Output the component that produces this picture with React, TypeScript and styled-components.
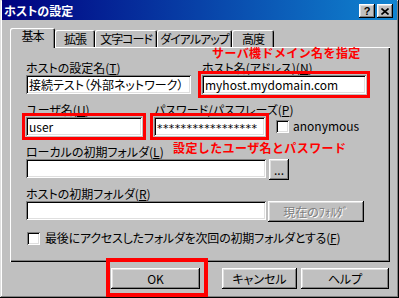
import React from 'react';
import styled, { createGlobalStyle } from 'styled-components';

const GlobalStyle = createGlobalStyle`
  html, body {
    margin: 0;
    padding: 0;
    background: #c0c0c0;
  }
  body {
    font-family: "Noto Sans CJK JP", sans-serif;
    font-size: 12px;
    font-feature-settings: "palt";
    color: #000;
  }
  * {
    box-sizing: border-box;
  }
`;

const raised = `
  box-shadow: inset -1px -1px #000, inset 1px 1px #fff, inset -2px -2px #808080, inset 2px 2px #dfdfdf;
`;

const sunken = `
  box-shadow: inset 1px 1px #808080, inset -1px -1px #fff, inset 2px 2px #000, inset -2px -2px #dfdfdf;
`;

const Window = styled.div`
  width: 399px;
  height: 298px;
  background: #c0c0c0;
  padding: 0 2px 2px 2px;
  display: flex;
  flex-direction: column;
  box-shadow: inset -1px -1px #000, inset 1px 1px #dfdfdf, inset -2px -2px #808080, inset 2px 2px #fff;
`;

const TitleBar = styled.div`
  flex: none;
  height: 20px;
  display: flex;
  align-items: center;
  padding: 2px 4px 0 2px;
  background: linear-gradient(to right, #000080, #1084d0);
`;

const Title = styled.span`
  flex: 1;
  color: #fff;
  font-weight: bold;
  line-height: 14px;
`;

const CapButton = styled.span`
  width: 16px;
  height: 14px;
  background: #c0c0c0;
  ${raised}
  display: flex;
  align-items: center;
  justify-content: center;
  font: bold 11px "Liberation Sans", sans-serif;
  line-height: 14px;
  & + & {
    margin-left: 2px;
  }
`;

const TabStrip = styled.div`
  position: relative;
  z-index: 1;
  display: flex;
  align-items: flex-end;
  height: 19px;
  margin: 8px 0 0 8px;
`;

const Tab = styled.div<{ $w: number; $active?: boolean }>`
  flex: none;
  width: ${p => p.$w}px;
  height: ${p => (p.$active ? 20 : 17)}px;
  margin-bottom: ${p => (p.$active ? -1 : 0)}px;
  padding-top: ${p => (p.$active ? 1 : 2)}px;
  text-align: center;
  line-height: 14px;
  letter-spacing: -1px;
  white-space: nowrap;
  background: #c0c0c0;
  border-radius: 2px 2px 0 0;
  box-shadow: inset 1px 1px #fff, inset -1px 0 #000, inset -2px 0 #808080;
`;

const Panel = styled.div`
  position: relative;
  flex: none;
  height: 215px;
  margin: 0 7px 0 8px;
  padding: 13px 0 0 16px;
  box-shadow: inset 1px 1px #fff, inset -1px -1px #000, inset -2px -2px #808080;
`;

// red annotations drawn over the dialog
const Note = styled.div`
  position: absolute;
  color: #f00;
  font-weight: bold;
  font-feature-settings: normal;
  letter-spacing: 0.4px;
  line-height: 12px;
  white-space: nowrap;
`;

const Row = styled.div<{ $gap: number }>`
  display: flex;
  align-items: flex-end;
  gap: ${p => p.$gap}px;
  & + & {
    margin-top: 8px;
  }
`;

const Field = styled.div<{ $w?: number }>`
  flex: none;
  width: ${p => (p.$w ? `${p.$w}px` : 'auto')};
  display: flex;
  flex-direction: column;
`;

const Label = styled.div`
  height: 15px;
  padding-top: 1px;
  line-height: 14px;
  white-space: nowrap;
`;

const Key = styled.span`
  text-decoration: underline;
`;

const Input = styled.div<{ $w?: number; $marked?: boolean }>`
  width: ${p => (p.$w ? `${p.$w}px` : '100%')};
  height: 19px;
  flex: none;
  padding: 0 3px;
  background: #fff;
  ${sunken}
  line-height: 19px;
  text-align: left;
  white-space: nowrap;
  overflow: hidden;
  outline: ${p => (p.$marked ? '3px solid #f00' : 'none')};
  outline-offset: 1px;
`;

const Secret = styled.span`
  font-family: "DejaVu Sans", sans-serif;
  font-size: 11px;
  letter-spacing: 0.4px;
`;

const InputLine = styled.div<{ $gap: number }>`
  display: flex;
  align-items: flex-start;
  height: 19px;
  gap: ${p => p.$gap}px;
`;

const PushButton = styled.div<{ $w: number; $disabled?: boolean }>`
  width: ${p => p.$w}px;
  height: 21px;
  flex: none;
  background: #c0c0c0;
  ${raised}
  display: flex;
  align-items: center;
  justify-content: center;
  white-space: nowrap;
  color: ${p => (p.$disabled ? '#808080' : '#000')};
  text-shadow: ${p => (p.$disabled ? '1px 1px #fff' : 'none')};
`;

const Check = styled.div<{ $gap: number }>`
  display: flex;
  align-items: center;
  gap: ${p => p.$gap}px;
  white-space: nowrap;
  line-height: 14px;
`;

const CheckBox = styled.span`
  width: 13px;
  height: 13px;
  flex: none;
  background: #fff;
  ${sunken}
`;

const AnonCheck = styled(Check)`
  flex: none;
  margin: 0 0 3px -1px;
`;

const LastRow = styled.div`
  margin: 11px 0 0 1px;
  letter-spacing: -0.2px;
`;

const Footer = styled.div`
  display: flex;
  justify-content: flex-end;
  gap: 4px;
  margin-top: 6px;
  padding-right: 8px;
`;

const Marked = styled.div`
  position: relative;
  margin-right: 18px;
`;

const RedFrame = styled.div`
  position: absolute;
  top: -10px;
  bottom: -8px;
  left: -5px;
  right: -8px;
  border: 4px solid #f00;
  pointer-events: none;
`;

export default function App() {
  return (
    <>
      <GlobalStyle />
      <Window>
        <TitleBar>
          <Title>ホストの設定</Title>
          <CapButton>?</CapButton>
          <CapButton>
            <svg width="8" height="7" viewBox="0 0 8 7">
              <path d="M0.5 0.5 L7.5 6.5 M7.5 0.5 L0.5 6.5" stroke="#000" strokeWidth="1.6" />
            </svg>
          </CapButton>
        </TitleBar>

        <TabStrip>
          <Tab $w={45} $active>基本</Tab>
          <Tab $w={40}>拡張</Tab>
          <Tab $w={62}>文字コード</Tab>
          <Tab $w={75}>ダイアルアップ</Tab>
          <Tab $w={42}>高度</Tab>
        </TabStrip>

        <Panel>
          <Note style={{ left: 202, top: 0 }}>サーバ機ドメイン名を指定</Note>
          <Note style={{ left: 163, top: 95 }}>設定したユーザ名とパスワード</Note>

          <Row $gap={11}>
            <Field $w={165}>
              <Label>ホストの設定名(<Key>T</Key>)</Label>
              <Input>接続テスト（外部ネットワーク）</Input>
            </Field>
            <Field $w={164}>
              <Label>ホスト名(アドレス)(<Key>N</Key>)</Label>
              <Input $marked>myhost.mydomain.com</Input>
            </Field>
          </Row>

          <Row $gap={12}>
            <Field $w={116}>
              <Label>ユーザ名(<Key>U</Key>)</Label>
              <Input $marked>user</Input>
            </Field>
            <Field $w={111}>
              <Label>パスワード/パスフレーズ(<Key>P</Key>)</Label>
              <Input $marked>
                <Secret>*****************</Secret>
              </Input>
            </Field>
            <AnonCheck $gap={4}>
              <CheckBox />
              <span>anonymous</span>
            </AnonCheck>
          </Row>

          <Row $gap={0}>
            <Field>
              <Label>ローカルの初期フォルダ(<Key>L</Key>)</Label>
              <InputLine $gap={3}>
                <Input $w={240} />
                <PushButton $w={20}>...</PushButton>
              </InputLine>
            </Field>
          </Row>

          <Row $gap={0}>
            <Field>
              <Label>ホストの初期フォルダ(<Key>R</Key>)</Label>
              <InputLine $gap={2}>
                <Input $w={240} />
                <PushButton $w={96} $disabled>現在のﾌｫﾙﾀﾞ</PushButton>
              </InputLine>
            </Field>
          </Row>

          <LastRow>
            <Check $gap={5}>
              <CheckBox />
              <span>
                最後にアクセスしたフォルダを次回の初期フォルダとする(<Key>F</Key>)
              </span>
            </Check>
          </LastRow>
        </Panel>

        <Footer>
          <Marked>
            <PushButton $w={89}>OK</PushButton>
            <RedFrame />
          </Marked>
          <PushButton $w={75}>キャンセル</PushButton>
          <PushButton $w={88}>ヘルプ</PushButton>
        </Footer>
      </Window>
    </>
  );
}
